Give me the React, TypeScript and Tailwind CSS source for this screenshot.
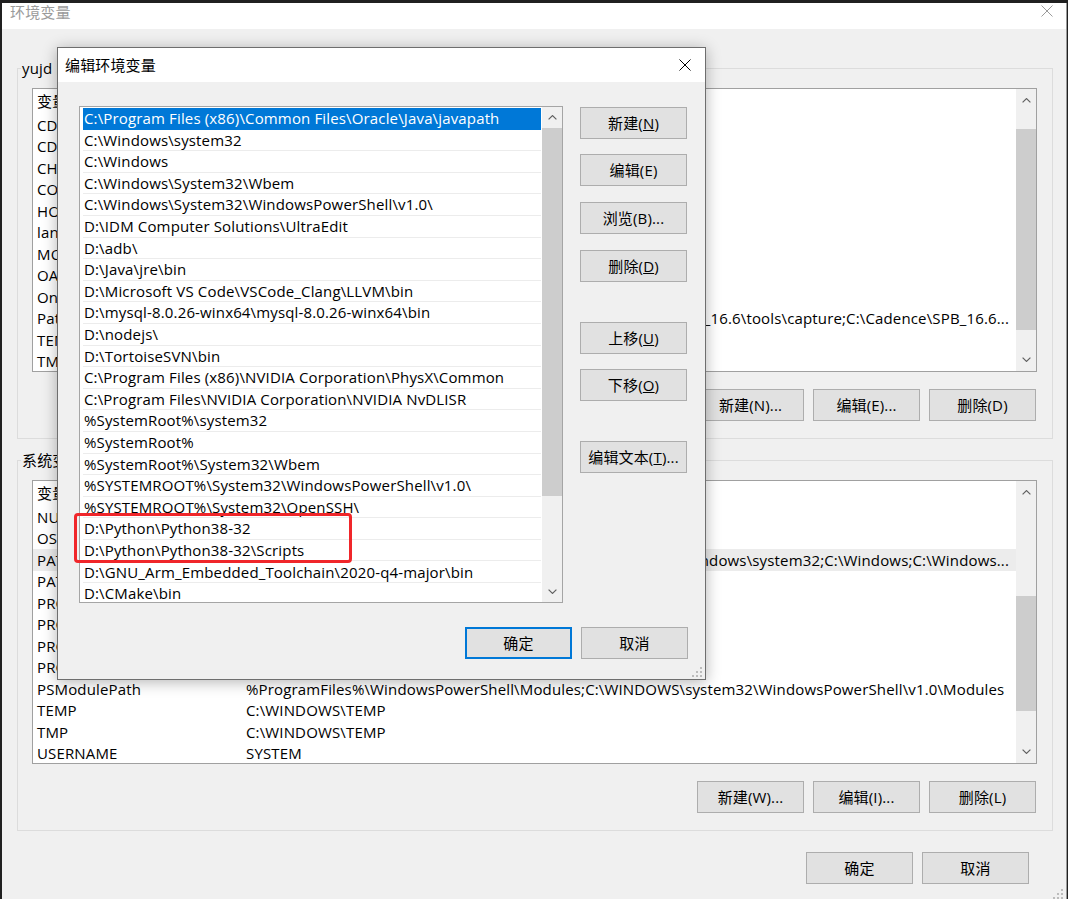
import React from "react";

type Row = { name: string; value: string; long?: boolean; selected?: boolean };

const userVars: Row[] = [
  { name: "CDS_LIC_FILE", value: "5280@localhost" },
  { name: "CDSROOT", value: "C:\\Cadence\\SPB_16.6" },
  { name: "CHROME_PATH", value: "C:\\Chrome" },
  { name: "CONCEPT_INST_DIR", value: "C:\\Cadence\\SPB_16.6" },
  { name: "HOME", value: "C:\\Users\\yujd" },
  { name: "lang", value: "chs" },
  { name: "MOZ_PLUGIN_PATH", value: "C:\\Foxit\\plugins\\" },
  { name: "OANDA", value: "1" },
  { name: "OneDrive", value: "C:\\Users\\yujd\\OneDrive" },
  {
    name: "Path",
    value:
      "C:\\Cadence\\SPB_16.6\\tools\\bin;C:\\Cadence\\SPB_16.6\\tools\\pcb\\bin;C:\\Cadence\\SPB_16.6\\tools\\capture;C:\\Cadence\\SPB_16.6...",
    long: true,
  },
  { name: "TEMP", value: "%USERPROFILE%\\AppData\\Local\\Temp" },
  { name: "TMP", value: "%USERPROFILE%\\AppData\\Local\\Temp" },
];

const systemVars: Row[] = [
  { name: "NUMBER_OF_PROCESSORS", value: "8" },
  { name: "OS", value: "Windows_NT" },
  {
    name: "PATH",
    value:
      "C:\\Program Files (x86)\\Common Files\\Oracle\\Java\\javapath;C:\\Windows\\system32;C:\\Windows;C:\\Windows...",
    long: true,
    selected: true,
  },
  { name: "PATHEXT", value: ".COM;.EXE;.BAT;.CMD;.VBS" },
  { name: "PROCESSOR_ARCHITECTURE", value: "AMD64" },
  { name: "PROCESSOR_IDENTIFIER", value: "Intel64 Family 6 Model 158" },
  { name: "PROCESSOR_LEVEL", value: "6" },
  { name: "PROCESSOR_REVISION", value: "9e0a" },
  {
    name: "PSModulePath",
    value:
      "%ProgramFiles%\\WindowsPowerShell\\Modules;C:\\WINDOWS\\system32\\WindowsPowerShell\\v1.0\\Modules",
  },
  { name: "TEMP", value: "C:\\WINDOWS\\TEMP" },
  { name: "TMP", value: "C:\\WINDOWS\\TEMP" },
  { name: "USERNAME", value: "SYSTEM" },
];

const paths = [
  "C:\\Program Files (x86)\\Common Files\\Oracle\\Java\\javapath",
  "C:\\Windows\\system32",
  "C:\\Windows",
  "C:\\Windows\\System32\\Wbem",
  "C:\\Windows\\System32\\WindowsPowerShell\\v1.0\\",
  "D:\\IDM Computer Solutions\\UltraEdit",
  "D:\\adb\\",
  "D:\\Java\\jre\\bin",
  "D:\\Microsoft VS Code\\VSCode_Clang\\LLVM\\bin",
  "D:\\mysql-8.0.26-winx64\\mysql-8.0.26-winx64\\bin",
  "D:\\nodejs\\",
  "D:\\TortoiseSVN\\bin",
  "C:\\Program Files (x86)\\NVIDIA Corporation\\PhysX\\Common",
  "C:\\Program Files\\NVIDIA Corporation\\NVIDIA NvDLISR",
  "%SystemRoot%\\system32",
  "%SystemRoot%",
  "%SystemRoot%\\System32\\Wbem",
  "%SYSTEMROOT%\\System32\\WindowsPowerShell\\v1.0\\",
  "%SYSTEMROOT%\\System32\\OpenSSH\\",
  "D:\\Python\\Python38-32",
  "D:\\Python\\Python38-32\\Scripts",
  "D:\\GNU_Arm_Embedded_Toolchain\\2020-q4-major\\bin",
  "D:\\CMake\\bin",
];

function Chevron({ down }: { down?: boolean }) {
  return (
    <svg width="9" height="5" viewBox="0 0 9 5" className={down ? "rotate-180" : ""}>
      <polyline points="0.6,4.4 4.5,0.6 8.4,4.4" fill="none" stroke="#606060" strokeWidth="1.2" />
    </svg>
  );
}

function CloseX({ color, size }: { color: string; size: number }) {
  return (
    <svg width={size} height={size} viewBox="0 0 12 12">
      <path d="M0.5 0.5 L11.5 11.5 M11.5 0.5 L0.5 11.5" stroke={color} strokeWidth="1" />
    </svg>
  );
}

function Grip() {
  return (
    <svg width="10" height="10" viewBox="0 0 10 10">
      <g fill="#bcbcbc">
        <rect x="8" y="0" width="2" height="2" />
        <rect x="8" y="4" width="2" height="2" />
        <rect x="4" y="4" width="2" height="2" />
        <rect x="8" y="8" width="2" height="2" />
        <rect x="4" y="8" width="2" height="2" />
        <rect x="0" y="8" width="2" height="2" />
      </g>
    </svg>
  );
}

function WinButton({
  children,
  primary,
  className = "",
}: {
  children: React.ReactNode;
  primary?: boolean;
  className?: string;
}) {
  return (
    <button
      className={`flex h-[32px] w-[107px] shrink-0 items-center justify-center bg-[#e1e1e1] text-[15px] leading-none text-black ${
        primary ? "border-2 border-[#0078d7]" : "border border-[#adadad]"
      } ${className}`}
    >
      {children}
    </button>
  );
}

function ScrollBar({ btn, thumb }: { btn: string; thumb: string }) {
  return (
    <div className="flex w-[20px] shrink-0 flex-col bg-[#f0f0f0]">
      <div className={`flex items-center justify-center ${btn}`}>
        <Chevron />
      </div>
      <div className={`bg-[#cdcdcd] ${thumb}`} />
      <div className="flex-1" />
      <div className={`flex items-center justify-center ${btn}`}>
        <Chevron down />
      </div>
    </div>
  );
}

function VarList({ rows, btn, thumb }: { rows: Row[]; btn: string; thumb: string }) {
  return (
    <div className="flex h-[284px] w-[1005px] border border-[#a0a0a0] bg-white">
      <div className="min-w-0 flex-1 overflow-hidden">
        <div className="flex h-[25px] items-center">
          <div className="w-[213px] shrink-0 pl-[4px]">变量</div>
          <div className="min-w-0 flex-1">值</div>
        </div>
        {rows.map((r, i) => (
          <div
            key={i}
            className={`flex h-[21.5px] items-center whitespace-nowrap ${r.selected ? "bg-[#ececec]" : ""}`}
          >
            <div className="w-[213px] shrink-0 overflow-hidden pl-[4px]">{r.name}</div>
            <div className={`min-w-0 flex-1 overflow-hidden pr-[7px] ${r.long ? "flex justify-end" : ""}`}>
              <span className="shrink-0">{r.value}</span>
            </div>
          </div>
        ))}
      </div>
      <ScrollBar btn={btn} thumb={thumb} />
    </div>
  );
}

function GroupBox({
  label,
  rows,
  buttons,
  btn,
  thumb,
  className = "",
}: {
  label: string;
  rows: Row[];
  buttons: string[];
  btn: string;
  thumb: string;
  className?: string;
}) {
  return (
    <fieldset className={`ml-[15px] w-[1036px] border border-[#dcdcdc] px-0 pt-[10px] pb-[17px] ${className}`}>
      <legend className="ml-[3px] px-[1px] leading-[20px]">{label}</legend>
      <div className="pl-[14px]">
        <VarList rows={rows} btn={btn} thumb={thumb} />
        <div className="mt-[17px] flex w-[1005px] justify-end gap-[9px] pr-[1px]">
          {buttons.map((b) => (
            <WinButton key={b}>{b}</WinButton>
          ))}
        </div>
      </div>
    </fieldset>
  );
}

function EditDialog() {
  const side = [
    { label: <>新建(<span className="underline">N</span>)</>, mt: "" },
    { label: <>编辑(E)</>, mt: "mt-[15px]" },
    { label: <>浏览(B)...</>, mt: "mt-[16px]" },
    { label: <>删除(<span className="underline">D</span>)</>, mt: "mt-[16px]" },
    { label: <>上移(<span className="underline">U</span>)</>, mt: "mt-[40px]" },
    { label: <>下移(<span className="underline">O</span>)</>, mt: "mt-[15px]" },
    { label: <>编辑文本(<span className="underline">T</span>)...</>, mt: "mt-[40px]" },
  ];
  return (
    <div className="absolute left-[57px] top-[47px] flex h-[633px] w-[649px] flex-col border border-[#6e6e6e] bg-[#f0f0f0] shadow-[0_2px_14px_rgba(0,0,0,0.3)]">
      <div className="flex h-[34px] items-center justify-between bg-white pl-[7px] pr-[14px]">
        <span className="leading-[20px]">编辑环境变量</span>
        <CloseX color="#000" size={12} />
      </div>
      <div className="flex pl-[21px] pt-[24px]">
        <div className="flex h-[497px] w-[484px] border border-[#a5a5a5] bg-white">
          <div className="min-w-0 flex-1 overflow-hidden pl-[3px] pr-[1px] pt-[1px]">
            {paths.map((p, i) => (
              <div
                key={i}
                className={`flex h-[21.6px] items-center whitespace-nowrap border-b pl-[1px] ${
                  i === 0 ? "border-[#0078d7] bg-[#0078d7] text-white" : "border-[#ececec]"
                }`}
              >
                {p}
              </div>
            ))}
          </div>
          <ScrollBar btn="h-[21px]" thumb="h-[368px]" />
        </div>
        <div className="ml-[17px] mt-[1px] flex flex-col">
          {side.map((s, i) => (
            <WinButton key={i} className={s.mt}>
              {s.label}
            </WinButton>
          ))}
        </div>
      </div>
      <div className="mt-[24px] flex justify-end gap-[9px] pr-[17px]">
        <WinButton primary>确定</WinButton>
        <WinButton>取消</WinButton>
      </div>
      <div className="absolute bottom-[2px] right-[3px] flex">
        <Grip />
      </div>
    </div>
  );
}

export default function App() {
  return (
    <div className="relative h-[899px] w-[1068px] overflow-hidden bg-[#202020] pl-[2px] pt-[3px] font-['Open_Sans','Noto_Sans_CJK_SC',sans-serif] text-[15px] tracking-[0.15px] text-black">
      <div className="relative flex h-[896px] w-[1065px] flex-col border-r border-[#9a9a9a] bg-[#f0f0f0]">
        <div className="flex h-[26px] items-start justify-between bg-white pl-[8px] pr-[13px]">
          <span className="pt-[1px] leading-[16px] text-[#9b9b9b]">环境变量</span>
          <div className="pt-[2px]">
            <CloseX color="#9b9b9b" size={12} />
          </div>
        </div>
        <GroupBox
          className="mt-[29px]"
          label="yujd 的用户变量"
          rows={userVars}
          buttons={["新建(N)...", "编辑(E)...", "删除(D)"]}
          btn="h-[23px]"
          thumb="mt-[17px] h-[201px]"
        />
        <GroupBox
          className="mt-[11px]"
          label="系统变量"
          rows={systemVars}
          buttons={["新建(W)...", "编辑(I)...", "删除(L)"]}
          btn="h-[23px]"
          thumb="mt-[92px] h-[115px]"
        />
        <div className="mt-[21px] flex justify-end gap-[9px] pr-[37px]">
          <WinButton>确定</WinButton>
          <WinButton>取消</WinButton>
        </div>
        <div className="absolute bottom-0 right-[3px] flex">
          <Grip />
        </div>
      </div>
      <EditDialog />
      <div className="absolute left-[74px] top-[513px] h-[50px] w-[278px] rounded-[4px] border-[3px] border-[#f0262a]" />
    </div>
  );
}
